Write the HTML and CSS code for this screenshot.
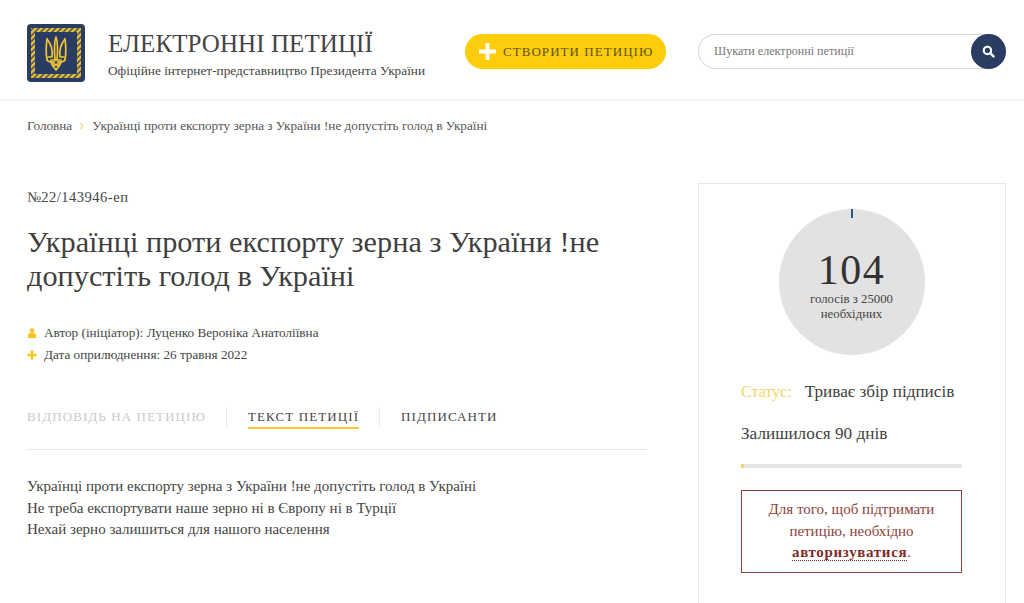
FILE: index.html
```html
<!DOCTYPE html>
<html lang="uk">
<head>
<meta charset="utf-8">
<title>Електронні петиції</title>
<link rel="stylesheet" href="styles.css">
</head>
<body>
<header class="site-header">
  <svg class="logo" viewBox="0 0 58 58" aria-hidden="true">
    <defs>
      <pattern id="braid" width="4" height="4" patternUnits="userSpaceOnUse" patternTransform="rotate(45)">
        <rect width="2.7" height="4" fill="#e6c035"/>
      </pattern>
    </defs>
    <rect width="58" height="58" rx="4" fill="#2b3c63"/>
    <path d="M4 4H54V54H4ZM8 8V50H50V8Z" fill="url(#braid)" fill-rule="evenodd"/>
    <g fill="none" stroke="#f0c52f" stroke-width="1.7" stroke-linejoin="round" stroke-linecap="round">
      <path d="M29 13 C26.500 20 27.500 28 28 36 M29 13 C31.500 20 30.500 28 30 36"/>
      <path d="M20 15 C19 22 19 30 20 36 C21 38 24 38 27.500 38"/>
      <path d="M38 15 C39 22 39 30 38 36 C37 38 34 38 30.500 38"/>
      <path d="M20 15 C24 20 26 26 25 33 L21 33 M38 15 C34 20 32 26 33 33 L37 33"/>
      <path d="M24 38 C24.500 41 27 43 29 46 C31 43 33.500 41 34 38 M24 36 H34"/>
      <path d="M26 39.500 L32 42 M32 39.500 L26 42"/>
    </g>
  </svg>
  <div class="brand">
    <div class="brand-title">ЕЛЕКТРОННІ ПЕТИЦІЇ</div>
    <div class="brand-sub">Офіційне інтернет-представництво Президента України</div>
  </div>
  <a class="create-btn" href="#">
    <svg class="create-plus" viewBox="0 0 18 18" aria-hidden="true"><path d="M7 0h4v7h7v4h-7v7H7v-7H0V7h7z" fill="#fff"/></svg>
    <span>СТВОРИТИ ПЕТИЦІЮ</span>
  </a>
  <form class="search">
    <span class="search-text">Шукати електронні петиції</span>
    <span class="search-btn">
      <svg viewBox="0 0 12 12" aria-hidden="true"><circle cx="5" cy="5" r="3.4" fill="none" stroke="#fff" stroke-width="2"/><path d="M7.600 7.600 10.600 10.600" stroke="#fff" stroke-width="2.300" stroke-linecap="round"/></svg>
    </span>
  </form>
</header>

<nav class="crumbs">
  <a href="#">Головна</a>
  <svg class="crumb-sep" viewBox="0 0 6 8" aria-hidden="true"><path d="M1 1l3 3-3 3" fill="none" stroke="#f6dd90" stroke-width="1.400"/></svg>
  <a href="#">Українці проти експорту зерна з України !не допустіть голод в Україні</a>
</nav>

<main class="content">
  <article class="petition">
    <div class="petition-num">№22/143946-еп</div>
    <h1 class="petition-title">Українці проти експорту зерна з України !не<br>допустіть голод в Україні</h1>
    <div class="meta">
      <div class="meta-row">
        <svg class="meta-icon" viewBox="0 0 10 10" aria-hidden="true"><circle cx="5" cy="2.600" r="2.400" fill="#f7c61d"/><path d="M.8 10V7.600C.8 5.800 2.400 4.800 5 4.800s4.200 1 4.200 2.800V10z" fill="#f7c61d"/></svg>
        <span>Автор (ініціатор): Луценко Вероніка Анатоліївна</span>
      </div>
      <div class="meta-row">
        <svg class="meta-icon" viewBox="0 0 10 10" aria-hidden="true"><path d="M3.800.5h2.400v3.300h3.300v2.400H6.200v3.300H3.800V6.200H.5V3.800h3.300z" fill="#f7c61d"/></svg>
        <span>Дата оприлюднення: 26 травня 2022</span>
      </div>
    </div>
    <div class="tabs">
      <a class="tab tab-muted" href="#">ВІДПОВІДЬ НА ПЕТИЦІЮ</a>
      <a class="tab tab-active" href="#">ТЕКСТ ПЕТИЦІЇ</a>
      <a class="tab" href="#">ПІДПИСАНТИ</a>
    </div>
    <div class="petition-body">
      <p>Українці проти експорту зерна з України !не допустіть голод в Україні</p>
      <p>Не треба експортувати наше зерно ні в Європу ні в Турції</p>
      <p>Нехай зерно залишиться для нашого населення</p>
    </div>
  </article>

  <aside class="card">
    <div class="votes">
      <span class="votes-tick"></span>
      <div class="votes-num">104</div>
      <div class="votes-label">голосів з 25000<br>необхідних</div>
    </div>
    <div class="status"><span class="status-key">Статус:</span><span>Триває збір підписів</span></div>
    <div class="remain">Залишилося 90 днів</div>
    <div class="bar"><div class="bar-fill"></div></div>
    <div class="notice">Для того, щоб підтримати петицію, необхідно <a class="notice-link" href="#">авторизуватися</a>.</div>
  </aside>
</main>
</body>
</html>
```

FILE: styles.css
```css
* { box-sizing: border-box; }
html, body { margin: 0; height: 603px; overflow: hidden; }
body {
  background: #fff;
  color: #3d3d3d;
  font-family: "Liberation Serif", "DejaVu Serif", serif;
  display: flex;
  flex-direction: column;
}
a { color: inherit; text-decoration: none; }

.site-header {
  display: flex;
  align-items: center;
  height: 101px;
  padding: 4px 18px 0 27px;
  border-bottom: 2px solid #f4f4f4;
  flex: none;
}
.logo { width: 58px; height: 58px; margin-top: 3px; flex: none; }
.brand { margin-left: 23px; margin-top: 5px; width: 357px; }
.brand-title { font-size: 25px; line-height: 30px; color: #444; letter-spacing: .08px; }
.brand-sub { font-size: 13.300px; line-height: 18px; margin-top: 3px; color: #444; }

.create-btn {
  display: flex;
  align-items: center;
  width: 201px;
  height: 35px;
  padding-left: 14px;
  border-radius: 18px;
  background: #fdcc0a;
  color: #5c5320;
  font-size: 13px;
  letter-spacing: 1.050px;
  flex: none;
}
.create-plus { width: 17px; height: 17px; margin-right: 7px; flex: none; }

.search {
  display: flex;
  align-items: center;
  justify-content: space-between;
  width: 308px;
  height: 35px;
  margin-left: 32px;
  padding-left: 15px;
  border: 1px solid #d3d6dc;
  border-right: 0;
  border-radius: 18px;
  flex: none;
}
.search-text { font-size: 12.100px; color: #777; }
.search-btn {
  display: flex;
  align-items: center;
  justify-content: center;
  width: 35px;
  height: 35px;
  margin: -1px 0;
  border-radius: 50%;
  background: #2b3c63;
}
.search-btn svg { width: 13px; height: 13px; }

.crumbs {
  display: flex;
  align-items: center;
  height: 50px;
  padding-left: 27px;
  font-size: 13.200px;
  color: #555;
  flex: none;
}
.crumb-sep { width: 6px; height: 8px; margin: 0 7px 0 7px; }

.content {
  display: flex;
  flex: 1;
  min-height: 0;
  padding: 32px 18px 0 27px;
}
.petition { width: 619px; flex: none; }
.petition-num { font-size: 14.500px; line-height: 18px; margin-top: 5px; color: #444; letter-spacing: .5px; }
.petition-title {
  margin: 19px 0 0;
  font-size: 30.300px;
  line-height: 34px;
  font-weight: 400;
  color: #3f3f3f;
}
.meta { margin-top: 29px; font-size: 13.200px; color: #444; }
.meta-row { display: flex; align-items: center; height: 22px; }
.meta-icon { width: 10px; height: 10px; margin-right: 7px; flex: none; }

.tabs {
  display: flex;
  align-items: flex-start;
  height: 43px;
  margin-top: 41px;
  border-bottom: 1px solid #e6e6e6;
}
.tab {
  height: 22px;
  font-size: 13px;
  line-height: 19px;
  letter-spacing: 1.100px;
  color: #454545;
  margin-right: 21px;
  position: relative;
}
.tab + .tab { margin-left: 21px; }
.tab + .tab::before {
  content: "";
  position: absolute;
  left: -22px;
  top: 0;
  height: 21px;
  width: 1px;
  background: #eaeaea;
}
.tab-muted { color: #c9c9c9; }
.tab-active { border-bottom: 2px solid #f6cb2f; }

.petition-body { margin-top: 26px; font-size: 15px; line-height: 21.500px; color: #444; }
.petition-body p { margin: 0; }

.card {
  width: 308px;
  margin-left: 52px;
  padding: 25px 43px 0 42px;
  border: 1px solid #e9e9e9;
  border-bottom: 0;
  flex: none;
}
.votes {
  position: relative;
  width: 146px;
  height: 146px;
  margin: 0 auto;
  border-radius: 50%;
  background: #e2e2e2;
  text-align: center;
}
.votes-tick {
  position: absolute;
  left: 72px;
  top: 0;
  width: 2px;
  height: 9px;
  background: #2b5c88;
}
.votes-num { padding-top: 37px; font-size: 42px; line-height: 48px; letter-spacing: 1.500px; color: #333; }
.votes-label { margin-top: -2px; font-size: 12.800px; line-height: 15px; color: #444; }

.status { display: flex; gap: 13px; margin-top: 26px; font-size: 17.200px; line-height: 22px; color: #3f3f3f; }
.status-key { color: #f2d568; font-size: 16px; }
.remain { margin-top: 20px; font-size: 17.200px; line-height: 22px; color: #3f3f3f; }
.bar { height: 4px; margin-top: 19px; background: #e6e6e6; }
.bar-fill { width: 3px; height: 100%; background: #f2d568; }
.notice {
  margin-top: 22px;
  height: 83px;
  padding: 8px 10px 0;
  border: 1px solid #8c3f3c;
  font-size: 15px;
  line-height: 21.500px;
  color: #8c3f3c;
  text-align: center;
}
.notice-link { font-weight: 700; letter-spacing: .65px; color: #7e2b27; border-bottom: 1px dotted #7e2b27; }
```
